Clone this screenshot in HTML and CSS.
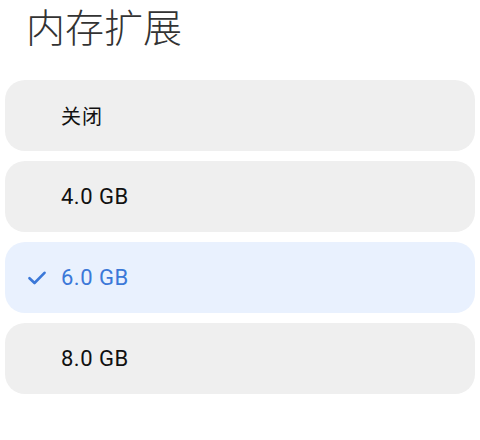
FILE: index.html
```html
<!DOCTYPE html>
<html lang="zh-CN">
<head>
    <meta charset="UTF-8">
    <meta name="viewport" content="width=device-width, initial-scale=1.0">
    <title>内存扩展</title>
    <link rel="stylesheet" href="styles.css">
</head>
<body>

<div class="page">
    <h1 class="title">内存扩展</h1>
    <div class="options">
        <div class="option">
            <span class="check"></span>
            <span class="label cjk">关闭</span>
        </div>
        <div class="option">
            <span class="check"></span>
            <span class="label">4.0 GB</span>
        </div>
        <div class="option selected">
            <span class="check">
                <svg width="18" height="14" viewBox="0 0 18 14">
                    <path d="M1.5 7.2 L6.5 12 L16.5 1.8" fill="none" stroke="#3b78d8" stroke-width="2.6" stroke-linecap="round" stroke-linejoin="round"/>
                </svg>
            </span>
            <span class="label">6.0 GB</span>
        </div>
        <div class="option">
            <span class="check"></span>
            <span class="label">8.0 GB</span>
        </div>
    </div>
</div>

</body>
</html>
```

FILE: styles.css
```css
body {
    margin: 0;
    background-color: #ffffff;
    font-family: Roboto, "Noto Sans CJK SC", sans-serif;
}
.page {
    padding: 5px 5px 0 5px;
}
.title {
    margin: 0 0 0 21px;
    height: 75px;
    font-size: 39px;
    font-weight: 300;
    color: #333333;
    line-height: 48px;
}
.options {
    display: flex;
    flex-direction: column;
    gap: 10px;
}
.option {
    display: flex;
    align-items: center;
    height: 71px;
    border-radius: 20px;
    background-color: #efefef;
    padding-left: 23px;
}
.option.selected {
    background-color: #e9f1fe;
}
.check {
    display: flex;
    width: 33px;
    align-items: center;
}
.label {
    font-size: 22px;
    color: #111111;
    letter-spacing: 0.5px;
}
.label.cjk {
    font-size: 20px;
    letter-spacing: 1px;
}
.selected .label {
    color: #3b78d8;
}
```
